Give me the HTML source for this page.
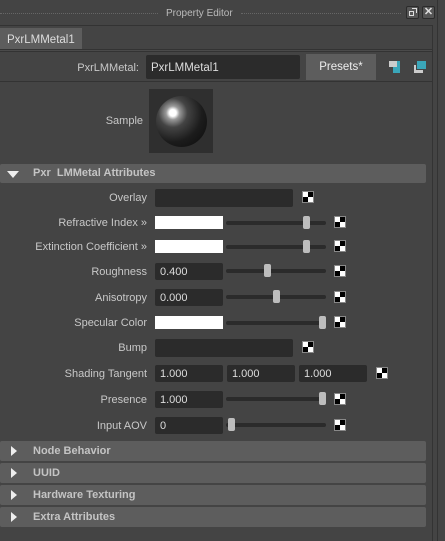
<!DOCTYPE html>
<html><head><meta charset="utf-8"><style>
body{margin:0;width:445px;height:541px;background:#444;overflow:hidden;position:relative;font-family:"Liberation Sans",sans-serif;font-size:11px;color:#c8c8c8}
div,span{position:absolute;box-sizing:border-box}
.lbl{text-align:right;width:200px;white-space:nowrap;line-height:14px}
.fld{background:#2b2b2b;border-radius:2px;color:#ddd;padding-left:5px;line-height:18px}
.wht{background:#fff}
.trk{height:4px;background:#2b2b2b;border-radius:2px}
.th{width:7px;height:13px;background:#bdbdbd;border-radius:2px}
.ck{width:12px;height:12px;border:1px solid #888;background:conic-gradient(#000 0 25%,#fff 0 50%,#000 0 75%,#fff 0)}
.hd{left:0;width:426px;height:20px;background:#5d5d5d;border-radius:2px;font-weight:bold;color:#c4c4c4;line-height:20px;padding-left:33px}
.tri{width:0;height:0;border-top:5px solid transparent;border-bottom:5px solid transparent;border-left:6px solid #eee;left:11px;top:5px}
</style></head><body>
<div style="left:0;top:13px;width:158px;border-top:1px dotted #666"></div>
<div style="left:241px;top:13px;width:160px;border-top:1px dotted #666"></div>
<div style="left:166px;top:8px;color:#bbb;font-size:10px">Property Editor</div>
<div style="left:406px;top:6px;width:13px;height:13px;border:1px solid #2b2b2b;background:#555;border-radius:2px"><div style="left:2px;top:4px;width:5px;height:5px;border:1px solid #ddd"></div><div style="left:5px;top:1px;width:5px;height:5px;border:1px solid #ddd;border-left:none;border-bottom:none"></div></div>
<div style="left:422px;top:6px;width:13px;height:13px;border:1px solid #2b2b2b;background:#555;border-radius:2px;color:#ddd;font-size:11px;line-height:11px;text-align:center;font-weight:bold">✕</div>
<div style="left:437px;top:0;width:1px;height:541px;background:#333"></div>
<div style="left:432px;top:26px;width:1px;height:515px;background:#333"></div>
<div style="left:0;top:25px;width:433px;height:1px;background:#333"></div>
<div style="left:0;top:28px;width:82px;height:21px;background:#5d5d5d;color:#ddd;padding:7px 0 0 7px;line-height:11px;font-size:11.5px">PxrLMMetal1</div>
<div style="left:0;top:49px;width:432px;height:3px;border-top:1px solid #333;border-bottom:1px solid #333;background:#4a4a4a"></div>
<div class="lbl" style="left:-61px;top:61px">PxrLMMetal:</div>
<div class="fld" style="left:146px;top:55px;width:154px;height:24px;line-height:26px;font-size:11.5px">PxrLMMetal1</div>
<div style="left:306px;top:54px;width:70px;height:26px;background:#5d5d5d;color:#eee;text-align:center;line-height:26px;font-size:11.5px">Presets*</div>
<div style="left:393px;top:61px;width:7px;height:12px;background:#3aa6b9"></div>
<div style="left:389px;top:61px;width:8px;height:6px;background:#ccc"></div>
<div style="left:414px;top:65px;width:9px;height:8px;background:#ccc"></div>
<div style="left:416px;top:61px;width:10px;height:9px;background:#3aa6b9;border-left:1px solid #444;border-bottom:1px solid #444"></div>
<div style="left:0;top:81px;width:432px;height:1px;background:#333"></div>
<div class="lbl" style="left:-57px;top:114px">Sample</div>
<div style="left:149px;top:89px;width:64px;height:64px;background:#2f2f2f"><div style="left:7px;top:7px;width:51px;height:51px;border-radius:50%;background:radial-gradient(circle at 33% 33%,#fff 0,#fff 7%,#999 14%,#444 30%,#1c1c1c 60%,#111 85%,#3a3a3a 100%)"></div></div>
<div class="hd" style="top:164px;height:19px;line-height:19px"><span class="tri" style="left:7px;top:7px;border-left:6px solid transparent;border-right:6px solid transparent;border-top:7px solid #eee;border-bottom:none"></span>Pxr&nbsp; LMMetal Attributes</div>

<div class="lbl" style="left:-53px;top:191px">Overlay</div>
<div class="fld" style="left:155px;top:189px;width:138px;height:18px"></div>
<div class="ck" style="left:302px;top:191px"></div>

<div class="lbl" style="left:-53px;top:216px">Refractive Index »</div>
<div class="wht" style="left:155px;top:216px;width:68px;height:13px"></div>
<div class="trk" style="left:226px;top:221px;width:100px"></div>
<div class="th" style="left:303px;top:216px"></div>
<div class="ck" style="left:334px;top:216px"></div>

<div class="lbl" style="left:-53px;top:240px">Extinction Coefficient »</div>
<div class="wht" style="left:155px;top:240px;width:68px;height:13px"></div>
<div class="trk" style="left:226px;top:245px;width:100px"></div>
<div class="th" style="left:303px;top:240px"></div>
<div class="ck" style="left:334px;top:240px"></div>

<div class="lbl" style="left:-53px;top:265px">Roughness</div>
<div class="fld" style="left:155px;top:263px;width:68px;height:17px">0.400</div>
<div class="trk" style="left:226px;top:269px;width:100px"></div>
<div class="th" style="left:264px;top:264px"></div>
<div class="ck" style="left:334px;top:265px"></div>

<div class="lbl" style="left:-53px;top:291px">Anisotropy</div>
<div class="fld" style="left:155px;top:289px;width:68px;height:17px">0.000</div>
<div class="trk" style="left:226px;top:295px;width:100px"></div>
<div class="th" style="left:273px;top:290px"></div>
<div class="ck" style="left:334px;top:291px"></div>

<div class="lbl" style="left:-53px;top:316px">Specular Color</div>
<div class="wht" style="left:155px;top:316px;width:68px;height:13px"></div>
<div class="trk" style="left:226px;top:321px;width:100px"></div>
<div class="th" style="left:319px;top:316px"></div>
<div class="ck" style="left:334px;top:316px"></div>

<div class="lbl" style="left:-53px;top:341px">Bump</div>
<div class="fld" style="left:155px;top:339px;width:138px;height:18px"></div>
<div class="ck" style="left:302px;top:341px"></div>

<div class="lbl" style="left:-53px;top:367px">Shading Tangent</div>
<div class="fld" style="left:155px;top:365px;width:68px;height:17px">1.000</div>
<div class="fld" style="left:227px;top:365px;width:68px;height:17px">1.000</div>
<div class="fld" style="left:299px;top:365px;width:68px;height:17px">1.000</div>
<div class="ck" style="left:376px;top:367px"></div>

<div class="lbl" style="left:-53px;top:393px">Presence</div>
<div class="fld" style="left:155px;top:391px;width:68px;height:17px">1.000</div>
<div class="trk" style="left:226px;top:397px;width:100px"></div>
<div class="th" style="left:319px;top:392px"></div>
<div class="ck" style="left:334px;top:393px"></div>

<div class="lbl" style="left:-53px;top:419px">Input AOV</div>
<div class="fld" style="left:155px;top:417px;width:68px;height:17px">0</div>
<div class="trk" style="left:226px;top:423px;width:100px"></div>
<div class="th" style="left:228px;top:418px"></div>
<div class="ck" style="left:334px;top:419px"></div>

<div class="hd" style="top:441px"><span class="tri"></span>Node Behavior</div>
<div class="hd" style="top:463px"><span class="tri"></span>UUID</div>
<div class="hd" style="top:485px"><span class="tri"></span>Hardware Texturing</div>
<div class="hd" style="top:507px"><span class="tri"></span>Extra Attributes</div>
</body></html>
